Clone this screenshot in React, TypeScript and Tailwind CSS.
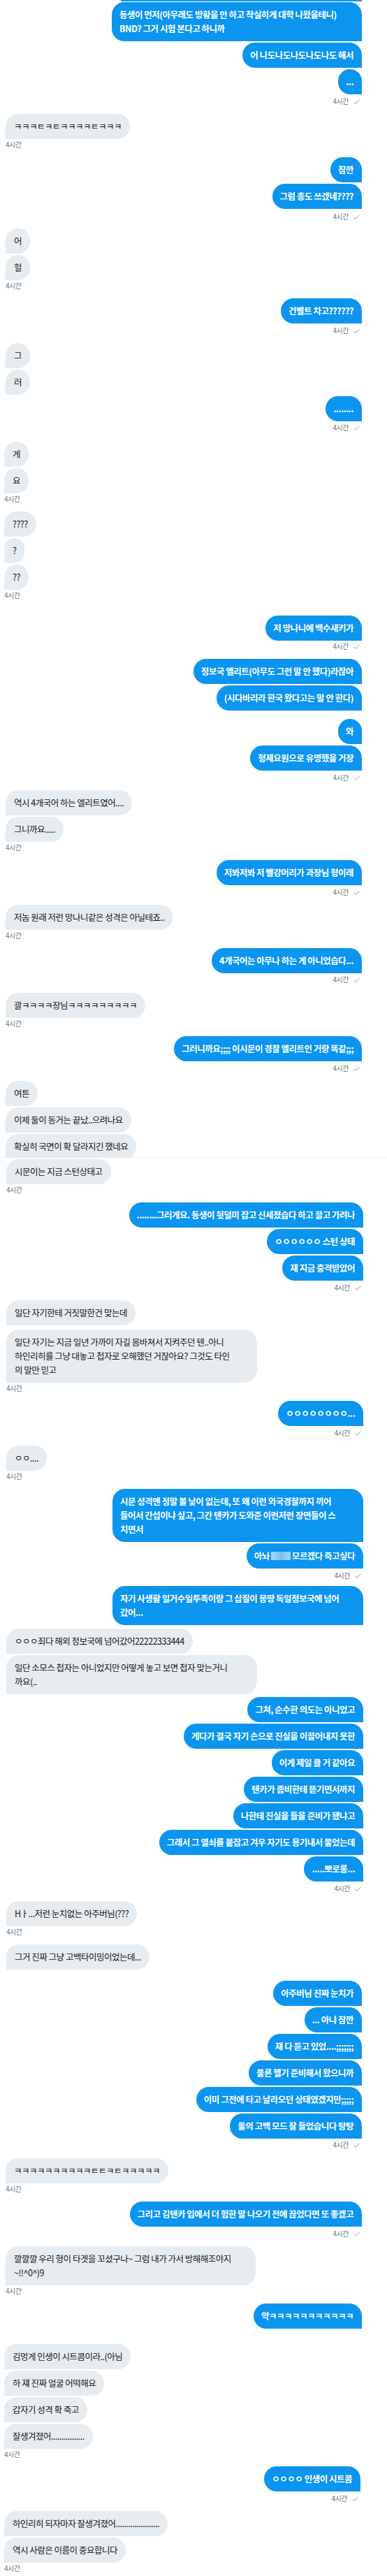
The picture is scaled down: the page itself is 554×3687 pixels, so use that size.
import React from "react";

type BP = { children?: React.ReactNode; c?: string; p?: string; w?: string };

function S({ children, c = "", p = "pr-[36px]", w = "" }: BP) {
  return (
    <div className={`flex justify-end ${p} ${c}`}>
      <div
        className={`rounded-[18px] rounded-br-none bg-[#0c95ef] pl-[11px] pr-3 py-2 text-[12.5px] leading-5 tracking-[-0.5px] font-bold text-white whitespace-nowrap ${w}`}
      >
        {children}
      </div>
    </div>
  );
}

function R({ children, c = "", p = "pl-[8px]", w = "" }: BP) {
  return (
    <div className={`flex justify-start ${p} ${c}`}>
      <div
        className={`rounded-[18px] rounded-bl-none bg-[#e6ecf0] px-3 py-2 text-[12.5px] leading-5 tracking-[-0.5px] text-[#14171a] whitespace-nowrap ${w}`}
      >
        {children}
      </div>
    </div>
  );
}

function TR({ c = "", p = "pr-[39px]" }: { c?: string; p?: string }) {
  return (
    <div className={`flex h-4 items-center justify-end gap-[7px] ${p} ${c}`}>
      <span className="text-[10px] leading-4 tracking-[-0.5px] text-[#657786]">4시간</span>
      <svg width="9" height="7" viewBox="0 0 9 7" className="block">
        <path d="M0.5 3.8 L3.2 6.3 L8.5 0.6" fill="none" stroke="#8899a6" strokeWidth="1" />
      </svg>
    </div>
  );
}

function TL({ c = "", p = "pl-[8px]" }: { c?: string; p?: string }) {
  return (
    <div className={`flex h-4 items-center ${p} ${c}`}>
      <span className="text-[10px] leading-4 tracking-[-0.5px] text-[#657786]">4시간</span>
    </div>
  );
}

export default function App() {
  const B = "pl-[6px]";
  const D = "pl-[9px]";
  const DR = "pr-[34px]";
  const DT = "pr-[37px]";
  const F = "pl-[6px]";
  const FR = "pr-[38px]";
  const FT = "pr-[41px]";
  return (
    <div className="min-h-[3687px] w-[554px] bg-white font-['Noto_Sans_CJK_KR','Noto_Sans',sans-serif]">
      {/* Segment A */}
      <div className="ml-[173px] mr-[36px] h-[2px] bg-[#0c95ef]" />
      <S c="mt-[1px]" w="w-[358px]">
        동생이 먼저(아무래도 방황을 안 하고 착실하게 대학 나왔을테니)
        <br />
        BND? 그거 시험 본다고 하니까
      </S>
      <S c="mt-[2px]">어 나도나도나도나도나도 해서</S>
      <S c="mt-[2px]">...</S>
      <TR c="mt-[2px]" />
      <R c="mt-[10px]">ㅋㅋㅋㅌㅋㅌㅋㅋㅋㅋㅌㅋㅋㅋ</R>
      <TL />
      <S c="mt-[10px]">잠깐</S>
      <S c="mt-[2px]">그럼 총도 쓰겠네????</S>
      <TR c="mt-[3px]" />
      <R c="mt-[9px]">어</R>
      <R c="mt-[2px]">헐</R>
      <TL />
      <S c="mt-[10px]">건벨트 차고??????</S>
      <TR c="mt-[2px]" />
      <R c="mt-[10px]">그</R>
      <R c="mt-[2px]">러</R>
      <S c="mt-[2px]">........</S>
      <TR c="mt-[1px]" />

      {/* Segment B */}
      <R c="mt-[12px]" p={B}>게</R>
      <R c="mt-[2px]" p={B}>요</R>
      <TL p={B} />
      <R c="mt-[10px]" p={B}>????</R>
      <R c="mt-[2px]" p={B}>?</R>
      <R c="mt-[2px]" p={B}>??</R>
      <TL p={B} />
      <S c="mt-[21px]">저 망나니에 백수새키가</S>
      <TR />

      {/* Segment C */}
      <S c="mt-[10px]">정보국 엘리트(아무도 그런 말 안 했다)라잖아</S>
      <S c="mt-[2px]">(시다바리라 한국 왔다고는 말 안 한다)</S>
      <S c="mt-[12px]">와</S>
      <S c="mt-[2px]">형제요원으로 유명했을 거장</S>
      <TR c="mt-[2px]" />
      <R c="mt-[10px]">역시 4개국어 하는 엘리트였어....</R>
      <R c="mt-[2px]">그니까요.....</R>
      <TL />
      <S c="mt-[10px]">저봐저봐 저 빨강머리가 과장님 형이래</S>
      <TR c="mt-[2px]" />
      <R c="mt-[10px]">저놈 원래 저런 망나니같은 성격은 아닐테죠..</R>
      <TL />
      <S c="mt-[10px]">4개국어는 아무나 하는 게 아니었습다...</S>
      <TR c="mt-[1px]" />
      <R c="mt-[11px]">괄ㅋㅋㅋㅋ장님ㅋㅋㅋㅋㅋㅋㅋㅋㅋ</R>
      <TL />
      <S c="mt-[10px]">그러니까요;;;; 이시문이 경찰 엘리트인 거랑 똑같;;;</S>
      <TR c="mt-[2px]" />
      <R c="mt-[10px]">여튼</R>
      <R c="mt-[2px]">이제 둘이 동거는 끝났..으려나요</R>
      <div className="mt-[2px] h-[33px] overflow-hidden">
        <R>확실히 국면이 확 달라지긴 했네요</R>
      </div>
      <div className="h-px w-full bg-[#e1e8ed]" />

      {/* Segment D */}
      <R c="mt-[2px]" p={D}>시문이는 지금 스턴상태고</R>
      <TL p={D} />
      <S c="mt-[10px]" p={DR}>........그러게요. 동생이 뒷덜미 잡고 신세졌습다 하고 끌고 가려나</S>
      <S c="mt-[2px]" p={DR}>ㅇㅇㅇㅇㅇㅇ 스턴 상태</S>
      <S c="mt-[2px]" p={DR}>쟤 지금 충격받았어</S>
      <TR c="mt-[2px]" p={DT} />
      <R c="mt-[10px]" p={D}>일단 자기한테 거짓말한건 맞는데</R>
      <R c="mt-[6px]" p={D} w="w-[359px]">
        일단 자기는 지금 일년 가까이 자길 몸바쳐서 지켜주던 텐..아니
        <br />
        하인리히를 그냥 대놓고 첩자로 오해했던 거잖아요? 그것도 타인
        <br />
        의 말만 믿고
      </R>
      <TL p={D} />
      <S c="mt-[10px]" p={DR}>ㅇㅇㅇㅇㅇㅇㅇㅇ...</S>
      <TR c="mt-[2px]" p={DT} />
      <R c="mt-[10px]" p={D}>ㅇㅇ....</R>
      <TL p={D} />
      <S c="mt-[10px]" p={DR} w="w-[359px]">
        시문 성격엔 정말 볼 낯이 없는데, 또 왜 이런 외국경찰까지 끼어
        <br />
        들어서 간섭이냐 싶고, 그간 텐카가 도와준 이런저런 장면들이 스
        <br />
        치면서
      </S>
      <S c="mt-[2px]" p={DR}>
        아놔
        <span className="mx-[2px] inline-block h-[12px] w-[28px] align-[-1px] bg-gradient-to-r from-[#a9d9f9] via-[#79bff3] to-[#a2d5f8]" />
        모르겠다 죽고싶다
      </S>
      <TR c="mt-[2px]" p={DT} />
      <S c="mt-[7px]" p={DR} w="w-[359px]">
        자기 사생활 일거수일투족이랑 그 삽질이 몽땅 독일정보국에 넘어
        <br />
        갔어...
      </S>
      <R c="mt-[5px]" p={D}>ㅇㅇㅇ죄다 해외 정보국에 넘어갔어22222333444</R>
      <R c="mt-[2px]" p={D} w="w-[359px]">
        일단 소모스 첩자는 아니었지만 어떻게 놓고 보면 첩자 맞는거니
        <br />
        까요(..
      </R>
      <S c="mt-[4px]" p={DR}>그쳐, 순수한 의도는 아니었고</S>
      <S c="mt-[2px]" p={DR}>게다가 결국 자기 손으로 진실을 이끌어내지 못한</S>
      <S c="mt-[2px]" p={DR}>이게 제일 클 거 같아요</S>
      <S c="mt-[2px]" p={DR}>텐카가 좀비한테 뜯기면서까지</S>
      <S c="mt-[2px]" p={DR}>나한테 진실을 들을 준비가 됐냐고</S>
      <S c="mt-[2px]" p={DR}>그래서 그 열쇠를 붙잡고 겨우 자기도 용기내서 물었는데</S>
      <S c="mt-[2px]" p={DR}>.....뽀로롱...</S>
      <TR c="mt-[2px]" p={DT} />
      <R c="mt-[10px]" p={D}>Hㅏ...저런 눈치없는 아주버님(???</R>
      <TL p={D} />
      <R c="mt-[10px]" p={D}>그거 진짜 그냥 고백타이밍이었는데...</R>

      {/* Segment E */}
      <S c="mt-[16px]">아주버님 진짜 눈치가</S>
      <S c="mt-[2px]">... 아냐 잠깐</S>
      <S c="mt-[2px]">쟤 다 듣고 있었....;;;;;;;</S>
      <S c="mt-[2px]">물론 헬기 준비해서 왔으니까</S>
      <S c="mt-[2px]">이미 그전에 타고 날라오던 상태였겠지만;;;;;</S>
      <S c="mt-[2px]">둘의 고백 모드 잘 들었습니다 탕탕</S>
      <TR c="mt-[1px]" />
      <R c="mt-[11px]">ㅋㅋㅋㅋㅋㅋㅋㅋㅋㅋㅌㅌㅋㅌㅋㅋㅋㅋㅋ</R>
      <TL />
      <S c="mt-[10px]">그리고 김텐카 입에서 더 험한 말 나오기 전에 끊었다면 또 좋겠고</S>
      <TR c="mt-[2px]" />
      <R c="mt-[10px]" w="w-[358px]">
        깔깔깔 우리 형이 타겟을 꼬셨구나~ 그럼 내가 가서 방해해조야지
        <br />
        ~!!^0^)9
      </R>
      <TL />
      <S c="mt-[10px]">약ㅋㅋㅋㅋㅋㅋㅋㅋㅋㅋㅋ</S>

      {/* Segment F */}
      <R c="mt-[22px]" p={F}>김멍게 인생이 시트콤이라..(아님</R>
      <R c="mt-[2px]" p={F}>하 쟤 진짜 얼굴 어떡해요</R>
      <R c="mt-[2px]" p={F}>갑자기 성격 확 죽고</R>
      <R c="mt-[2px]" p={F}>잘생겨졌어................</R>
      <TL p={F} />
      <S c="mt-[9px]" p={FR}>ㅇㅇㅇㅇ 인생이 시트콤</S>
      <TR c="mt-[2px]" p={FT} />
      <R c="mt-[10px]" p={F}>하인리히 되자마자 잘생겨졌어.....................</R>
      <R c="mt-[2px]" p={F}>역시 사람은 이름이 중요합니다</R>
      <TL p={F} />
    </div>
  );
}
